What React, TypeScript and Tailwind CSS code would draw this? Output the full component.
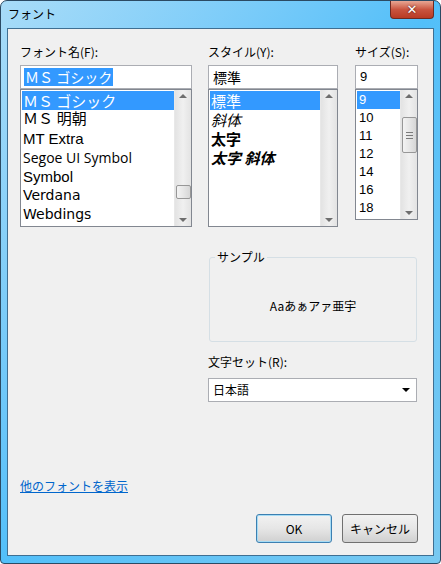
import React, { useState } from 'react';

const uiFont = { fontFamily: '"Noto Sans CJK JP", "Liberation Sans", sans-serif' };

const fontNames = [
  { name: 'ＭＳ ゴシック', family: '"Noto Sans CJK JP", sans-serif', cls: 'text-[15px]' },
  { name: 'ＭＳ 明朝', family: '"Liberation Serif", "Noto Sans CJK JP", serif', cls: 'text-[15px]' },
  { name: 'MT Extra', family: '"Liberation Sans", sans-serif', cls: 'text-[15px]' },
  { name: 'Segoe UI Symbol', family: '"Open Sans", sans-serif', cls: 'text-[14px]' },
  { name: 'Symbol', family: '"Liberation Sans", sans-serif', cls: 'text-[15px]' },
  { name: 'Verdana', family: '"DejaVu Sans", sans-serif', cls: 'text-[14px]' },
  { name: 'Webdings', family: '"DejaVu Sans", sans-serif', cls: 'text-[14px]' },
];

const styles = [
  { name: '標準', cls: '' },
  { name: '斜体', cls: 'italic' },
  { name: '太字', cls: 'font-bold' },
  { name: '太字 斜体', cls: 'font-bold italic' },
];

const sizes = ['9', '10', '11', '12', '14', '16', '18'];

// 縦スクロールバー（上下の矢印とつまみ）
const ScrollBar: React.FC<{ thumbTop?: number; thumbHeight?: number; grip?: boolean }> = ({
  thumbTop,
  thumbHeight,
  grip,
}) => (
  <div className="relative w-[17px] h-full bg-gradient-to-r from-[#e3e3e3] via-[#f0f0f0] to-[#e3e3e3] border-l border-[#e8e8e8]">
    <div className="absolute top-[4px] left-0 w-full flex justify-center">
      <div className="w-0 h-0 border-l-[4px] border-r-[4px] border-b-[4px] border-l-transparent border-r-transparent border-b-[#6e6e6e]" />
    </div>
    <div className="absolute bottom-[4px] left-0 w-full flex justify-center">
      <div className="w-0 h-0 border-l-[4px] border-r-[4px] border-t-[4px] border-l-transparent border-r-transparent border-t-[#6e6e6e]" />
    </div>
    {thumbTop !== undefined && (
      <div
        className="absolute left-[1px] w-[15px] rounded-[2px] border border-[#979797] bg-gradient-to-r from-[#f3f3f3] via-[#e6e6e6] to-[#d6d6d6] flex flex-col items-center justify-center gap-[2px]"
        style={{ top: thumbTop, height: thumbHeight }}
      >
        {grip && (
          <>
            <div className="w-[7px] h-[1px] bg-[#7a7a7a]" />
            <div className="w-[7px] h-[1px] bg-[#7a7a7a]" />
            <div className="w-[7px] h-[1px] bg-[#7a7a7a]" />
          </>
        )}
      </div>
    )}
  </div>
);

const App: React.FC = () => {
  const [font] = useState('ＭＳ ゴシック');
  const [style] = useState('標準');
  const [size] = useState('9');

  return (
    <div className="w-[441px] h-[564px] bg-white" style={uiFont}>
      <div className="relative w-[441px] h-[564px] rounded-t-[7px] rounded-b-[4px] border border-[#2b4a63] bg-gradient-to-br from-[#a8dcf8] via-[#52bff9] to-[#78c9f1] flex flex-col">
        {/* タイトルバー */}
        <div className="h-[27px] flex items-start justify-between">
          <div className="pl-[7px] pt-[5px] text-[12px] leading-[16px] text-black">フォント</div>
          <div className="mr-[6px] w-[44px] h-[18px] rounded-b-[4px] border border-t-0 border-[#6e2a22] bg-gradient-to-b from-[#e7a694] via-[#c9543f] to-[#b93a23] flex items-center justify-center">
            <span className="text-white font-bold text-[13px] leading-none [text-shadow:0_0_2px_#3b0c04]" style={{ fontFamily: '"DejaVu Sans", sans-serif' }}>
              ✕
            </span>
          </div>
        </div>

        {/* クライアント領域 */}
        <div className="mx-[6px] h-[528px] border border-[#3f6f92] bg-[#f0f0f0] flex flex-col text-[12px] text-black">
          <div className="flex pl-[12px] pt-[15px]">
            {/* フォント名 */}
            <div className="w-[172px] flex flex-col">
              <div className="h-[16px] leading-[16px] mb-[5px]">フォント名(F):</div>
              <div className="h-[24px] border border-[#abadb3] bg-white flex items-center pl-[3px]">
                <span className="bg-[#3399ff] text-white text-[14px] leading-[18px] px-[1px]">ＭＳ ゴシック</span>
              </div>
              <div className="h-[138px] border border-[#828790] bg-white flex">
                <div className="flex-1 pt-[1px] pl-[1px]">
                  {fontNames.map((f) => (
                    <div
                      key={f.name}
                      className={`h-[19px] leading-[19px] pl-[1px] whitespace-pre ${f.cls} ${
                        f.name === font ? 'bg-[#3399ff] text-white' : 'text-black'
                      }`}
                      style={{ fontFamily: f.family }}
                    >
                      {f.name}
                    </div>
                  ))}
                </div>
                <ScrollBar thumbTop={95} thumbHeight={14} />
              </div>
            </div>

            <div className="ml-[16px] w-[210px] flex flex-col">
              <div className="flex">
                {/* スタイル */}
                <div className="w-[130px] flex flex-col">
                  <div className="h-[16px] leading-[16px] mb-[5px]">スタイル(Y):</div>
                  <div className="h-[24px] border border-[#abadb3] bg-white flex items-center pl-[4px] text-[14px]">標準</div>
                  <div className="h-[138px] border border-[#828790] bg-white flex">
                    <div className="flex-1 pt-[1px] pl-[1px]">
                      {styles.map((s) => (
                        <div
                          key={s.name}
                          className={`h-[19px] leading-[19px] text-[15px] pl-[1px] whitespace-nowrap ${s.cls} ${
                            s.name === style ? 'bg-[#3399ff] text-white' : 'text-black'
                          }`}
                        >
                          {s.name}
                        </div>
                      ))}
                    </div>
                    <ScrollBar />
                  </div>
                </div>

                {/* サイズ */}
                <div className="ml-[17px] w-[63px] flex flex-col">
                  <div className="h-[16px] leading-[16px] mb-[5px] whitespace-nowrap">サイズ(S):</div>
                  <div className="h-[24px] border border-[#abadb3] bg-white flex items-center pl-[4px] text-[13px]" style={{ fontFamily: '"Liberation Sans", sans-serif' }}>
                    9
                  </div>
                  <div className="h-[131px] border border-[#828790] bg-white flex">
                    <div className="flex-1 pt-[1px] pl-[1px]" style={{ fontFamily: '"Liberation Sans", sans-serif' }}>
                      {sizes.map((s) => (
                        <div
                          key={s}
                          className={`h-[18px] leading-[18px] text-[13px] pl-[2px] ${
                            s === size ? 'bg-[#3399ff] text-white' : 'text-black'
                          }`}
                        >
                          {s}
                        </div>
                      ))}
                    </div>
                    <ScrollBar thumbTop={27} thumbHeight={36} grip />
                  </div>
                </div>
              </div>

              {/* サンプル */}
              <div className="relative mt-[30px] ml-[1px] w-[208px] h-[85px] border border-[#d5dfe5] rounded-[3px] flex items-center justify-center pt-[12px]">
                <span className="absolute -top-[9px] left-[5px] px-[2px] bg-[#f0f0f0] leading-[16px]">サンプル</span>
                <span className="text-[12px]">Aaあぁアァ亜宇</span>
              </div>

              {/* 文字セット */}
              <div className="mt-[12px] h-[16px] leading-[16px]">文字セット(R):</div>
              <div className="mt-[8px] w-[209px] h-[24px] border border-[#abadb3] bg-white flex items-center justify-between pl-[4px] pr-[6px]">
                <span>日本語</span>
                <div className="w-0 h-0 border-l-[4px] border-r-[4px] border-t-[4px] border-l-transparent border-r-transparent border-t-black" />
              </div>
            </div>
          </div>

          {/* リンクとボタン */}
          <div className="pl-[12px] mt-[76px] h-[16px] leading-[16px]">
            <span className="text-[#0066cc] underline">他のフォントを表示</span>
          </div>
          <div className="mt-[20px] flex justify-end pr-[15px] gap-[10px]">
            <button className="w-[76px] h-[29px] rounded-[3px] border border-[#3c7fb1] bg-gradient-to-b from-[#f2f2f2] via-[#e6e6e6] to-[#d0d0d0] shadow-[inset_0_0_0_1px_#a6dcf5] text-[12px]">
              OK
            </button>
            <button className="w-[76px] h-[29px] rounded-[3px] border border-[#707070] bg-gradient-to-b from-[#f2f2f2] via-[#e6e6e6] to-[#d0d0d0] text-[12px]">
              キャンセル
            </button>
          </div>
        </div>
      </div>
    </div>
  );
};

export default App;
